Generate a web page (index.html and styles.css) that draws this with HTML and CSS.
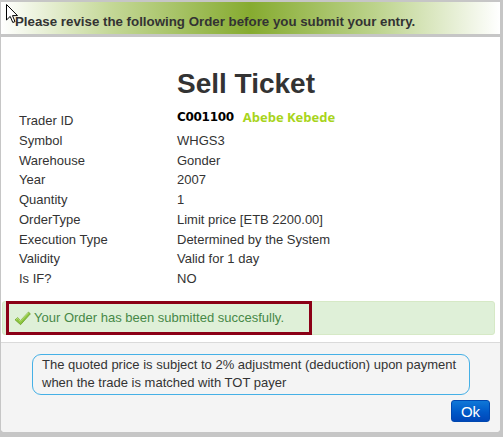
FILE: index.html
```html
<!DOCTYPE html>
<html>
<head>
<meta charset="utf-8">
<link rel="stylesheet" href="styles.css">
</head>
<body>
<div class="dialog">
  <div class="header">Please revise the following Order before you submit your entry.</div>
  <div class="content">
    <h1 class="title">Sell Ticket</h1>
    <div class="rows">
      <div class="label first">Trader ID</div>
      <div class="value first"><span class="tid">C001100</span><span class="tname">Abebe Kebede</span></div>
      <div class="label">Symbol</div><div class="value">WHGS3</div>
      <div class="label">Warehouse</div><div class="value">Gonder</div>
      <div class="label">Year</div><div class="value">2007</div>
      <div class="label">Quantity</div><div class="value">1</div>
      <div class="label">OrderType</div><div class="value">Limit price [ETB 2200.00]</div>
      <div class="label">Execution Type</div><div class="value">Determined by the System</div>
      <div class="label">Validity</div><div class="value">Valid for 1 day</div>
      <div class="label">Is IF?</div><div class="value">NO</div>
    </div>
    <div class="alert">
      <div class="alert-inner">
        <svg class="check" width="17" height="15" viewBox="0 0 16 14"><path d="M1 8.2 L3.6 6.2 L6 9 L13.6 1 L15.4 2.6 L6.2 12.8 Z" fill="#8cc63f" stroke="#6ea22a" stroke-width="0.8" stroke-linejoin="round"/><path d="M2 8 L3.6 6.8 L6 9.6 L13.6 1.6" fill="none" stroke="#c6e88a" stroke-width="0.8"/></svg>
        <span>Your Order has been submitted succesfully.</span>
      </div>
    </div>
  </div>
  <div class="footer">
    <div class="note">The quoted price is subject to 2% adjustment (deduction) upon payment when the trade is matched with TOT payer</div>
    <div class="actions"><button class="ok">Ok</button></div>
  </div>
</div>
<svg class="cursor" width="13" height="20" viewBox="0 0 13 20"><path d="M0.5 0.5 L0.5 16 L4.2 12.4 L6.8 18.5 L9 17.6 L6.5 11.6 L11.5 11.6 Z" fill="#fff" stroke="#000" stroke-width="1" stroke-linejoin="miter"/></svg>
</body>
</html>
```

FILE: styles.css
```css
html, body {
  margin: 0;
  padding: 0;
}
body {
  width: 503px;
  height: 437px;
  background: #c6c6c6;
  font-family: "Liberation Sans", Arial, sans-serif;
  color: #333;
  position: relative;
  overflow: hidden;
}
.dialog {
  margin: 2px 3px 0 1px;
  height: 430px;
  display: flex;
  flex-direction: column;
  background: #fff;
  border-radius: 0 0 4px 4px;
  overflow: hidden;
}
.header {
  height: 35px;
  box-sizing: border-box;
  border-bottom: 3px solid #c6c6c6;
  background: linear-gradient(to right, #ffffff 0%, #c4d897 22%, #86ab30 50%, #bcd38c 75%, #ffffff 100%);
  font-size: 13.3px;
  font-weight: bold;
  color: #333;
  padding: 12px 0 0 14px;
  line-height: 16px;
}
.content {
  flex: 1;
  background: #fff;
  padding: 0 2px 0 2px;
  display: flex;
  flex-direction: column;
}
.title {
  margin: 31px 0 0 174px;
  font-size: 28px;
  line-height: 32px;
  font-weight: bold;
  color: #333;
}
.rows {
  display: grid;
  grid-template-columns: 158px 1fr;
  padding-left: 16px;
  margin-top: 7px;
  font-size: 13px;
  line-height: 19.75px;
}
.label.first {
  padding-top: 4px;
}
.value.first {
  display: flex;
  align-items: center;
  gap: 9px;
  height: 20px;
  line-height: 20px;
}
.tid {
  font-family: "DejaVu Sans", Verdana, sans-serif;
  font-weight: bold;
  font-size: 12px;
  color: #000;
  letter-spacing: -0.3px;
}
.tname {
  font-family: "Open Sans", sans-serif;
  font-weight: bold;
  font-size: 13px;
  color: #a8d41c;
}
.alert {
  margin: 12px 3px 0 -1px;
  height: 34px;
  box-sizing: border-box;
  background: #dff0d8;
  border: 1px solid #d6e9c6;
  border-radius: 3px;
  position: relative;
}
.alert-inner {
  position: absolute;
  left: 3px;
  top: -1px;
  width: 306px;
  height: 34px;
  box-sizing: border-box;
  border: 3px solid #8b0016;
  display: flex;
  align-items: center;
  padding-left: 5px;
  gap: 3px;
  font-size: 13px;
  color: #468847;
}
.check {
  margin-top: 2px;
}
.footer {
  height: 90px;
  box-sizing: border-box;
  background: #f4f4f4;
  border-top: 1px solid #dadada;
  padding: 11px 10px 0 31px;
}
.note {
  width: 438px;
  box-sizing: border-box;
  border: 1px solid #45b0e6;
  border-radius: 9px;
  padding: 1px 8px 2px 9px;
  font-size: 13px;
  line-height: 18px;
  color: #333;
}
.actions {
  display: flex;
  justify-content: flex-end;
  margin-top: 5px;
}
.ok {
  width: 39px;
  height: 22px;
  border: 1px solid #0048b0;
  border-radius: 3px;
  background: linear-gradient(to bottom, #0f78d8 0%, #0059c8 55%, #0046b8 100%);
  color: #fff;
  font-family: "Liberation Sans", Arial, sans-serif;
  font-size: 15px;
  padding: 0;
}
.cursor {
  position: absolute;
  left: 6px;
  top: 4px;
}
```
